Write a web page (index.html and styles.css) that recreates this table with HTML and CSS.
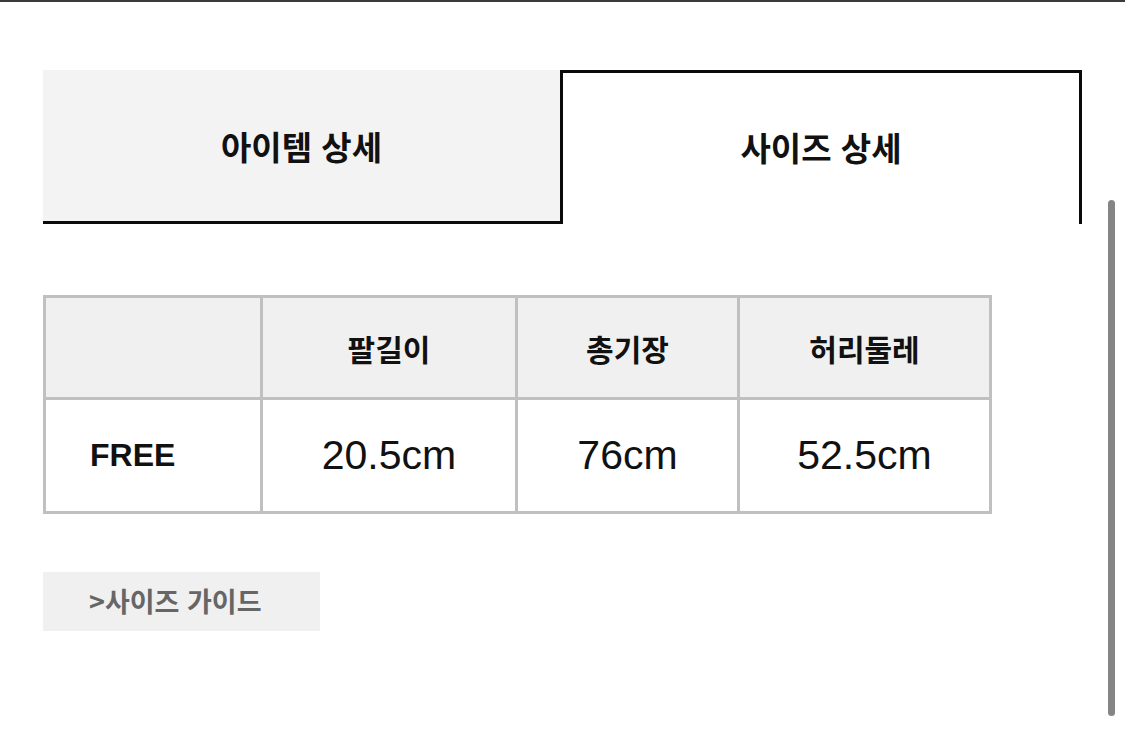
FILE: index.html
```html
<!DOCTYPE html>
<html lang="ko">
<head>
<meta charset="utf-8">
<link rel="stylesheet" href="styles.css">
</head>
<body>
<div class="topline"></div>
<main class="page">
  <div class="tabs">
    <div class="tab tab-off"><span>아이템 상세</span></div>
    <div class="tab tab-on"><span>사이즈 상세</span></div>
  </div>
  <table class="size-table">
    <colgroup>
      <col class="c1"><col class="c2"><col class="c3"><col class="c4">
    </colgroup>
    <thead>
      <tr><th></th><th>팔길이</th><th>총기장</th><th>허리둘레</th></tr>
    </thead>
    <tbody>
      <tr><td class="label">FREE</td><td>20.5cm</td><td>76cm</td><td>52.5cm</td></tr>
    </tbody>
  </table>
  <div class="guide">&gt;사이즈 가이드</div>
</main>
<div class="scrollbar"></div>
</body>
</html>
```
FILE: styles.css
```css
html, body {
  margin: 0;
  padding: 0;
  background: #ffffff;
  width: 1125px;
  height: 730px;
  overflow: hidden;
  font-family: "Noto Sans CJK KR", "Liberation Sans", sans-serif;
  color: #111;
}
.topline {
  height: 2px;
  background: #3a3a3a;
}
.page {
  padding: 68px 0 0 43px;
}
.tabs {
  display: flex;
  width: 1039px;
}
.tab {
  flex: 0 0 auto;
  height: 154px;
  box-sizing: border-box;
  display: flex;
  align-items: center;
  justify-content: center;
  font-size: 33px;
  font-weight: 700;
  letter-spacing: 0;
}
.tab-off {
  width: 517px;
  background: #f3f3f3;
  border-bottom: 3px solid #0a0a0a;
  padding-top: 1px;
}
.tab-on {
  width: 522px;
  background: #fff;
  border: 3px solid #0a0a0a;
  border-bottom: none;
  padding-bottom: 4px;
}
.size-table {
  margin-top: 71px;
  border-collapse: collapse;
  width: 946px;
  table-layout: fixed;
}
.c1 { width: 217px; }
.c2 { width: 255px; }
.c3 { width: 222px; }
.c4 { width: 252px; }
.size-table th,
.size-table td {
  border: 3px solid #c0c0c0;
  text-align: center;
  padding: 0;
}
.size-table th {
  height: 99px;
  background: #f0f0f0;
  font-size: 30px;
  font-weight: 700;
}
.size-table td {
  height: 111px;
  font-family: "Liberation Sans", sans-serif;
  font-size: 41px;
  font-weight: 400;
  color: #111;
}
.size-table td.label {
  text-align: left;
  padding-left: 44px;
  font-size: 32px;
  font-weight: 700;
}
.guide {
  margin-top: 58px;
  width: 277px;
  height: 59px;
  box-sizing: border-box;
  background: #f0f0f0;
  display: flex;
  align-items: center;
  padding-left: 46px;
  padding-bottom: 2px;
  font-size: 27px;
  font-weight: 700;
  color: #666;
}
.scrollbar {
  position: absolute;
  left: 1108px;
  top: 200px;
  width: 7px;
  height: 516px;
  border-radius: 4px;
  background: #858585;
}
```
